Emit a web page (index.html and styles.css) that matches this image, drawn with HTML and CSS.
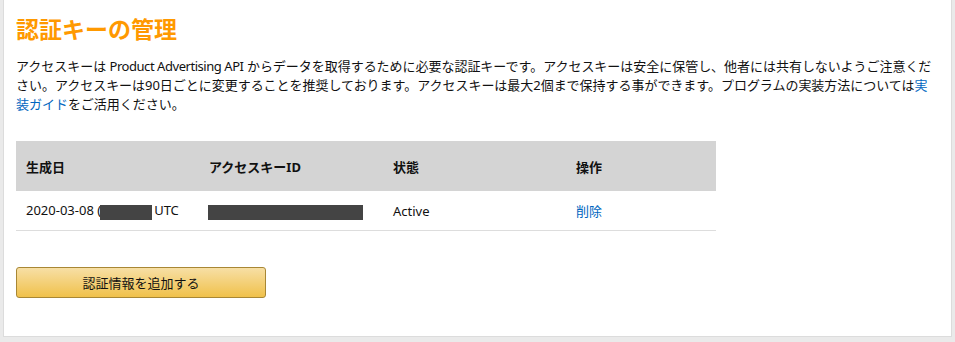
FILE: index.html
```html
<!DOCTYPE html>
<html>
  <head>
    <title>認証キーの管理</title>
    <meta charset="utf-8" />
    <link rel="stylesheet" href="styles.css">
  </head>
  <body>
    <div class="panel">
      <h1>認証キーの管理</h1>
      <p class="intro">
        アクセスキーは <span class="latin">Product Advertising API</span> からデータを取得するために必要な認証キーです。アクセスキーは安全に保管し、他者には共有しないようご注意ください。アクセスキーは90日ごとに変更することを推奨しております。アクセスキーは最大2個まで保持する事ができます。プログラムの実装方法については<a href="#">実装ガイド</a>をご活用ください。
      </p>

      <table class="keys">
        <thead>
          <tr>
            <th class="col-date">生成日</th>
            <th class="col-id">アクセスキーID</th>
            <th class="col-state">状態</th>
            <th class="col-action">操作</th>
          </tr>
        </thead>
        <tbody>
          <tr>
            <td class="nowrap">2020-03-08 (<span class="redacted short"></span>UTC</td>
            <td><span class="redacted long"></span></td>
            <td>Active</td>
            <td><a href="#">削除</a></td>
          </tr>
        </tbody>
      </table>

      <button class="add-button" type="button">認証情報を追加する</button>
    </div>
  </body>
</html>
```

FILE: styles.css
```css
:root {
  --text: #111;
  --link: #0066c0;
}

html,
body,
button,
table {
  font-family: "Noto Sans", "Noto Sans CJK JP", sans-serif;
  font-size: 13px;
  color: var(--text);
}

html {
  margin: 0;
  padding: 0;
}

body {
  margin: 0;
  padding: 0 3px;
  background: #eaeaea;
}

.panel {
  box-sizing: border-box;
  height: 337px;
  background: #fff;
  border: 1px solid #dcdcdc;
  border-top: 0;
  padding: 16px 13px 0 12px;
}

h1 {
  margin: 0;
  font-size: 23px;
  line-height: 26px;
  font-weight: bold;
  color: #f90;
}

.intro {
  margin: 15px 0 0 0;
  line-height: 19px;
  letter-spacing: -0.03px;
}

.intro .latin {
  letter-spacing: -0.45px;
}

a {
  color: var(--link);
  text-decoration: none;
}

.keys {
  margin-top: 27px;
  width: 700px;
  border-collapse: collapse;
}

.keys th {
  background: #d4d4d4;
  height: 50px;
  padding: 0 10px;
  text-align: left;
  font-weight: bold;
}

.keys td {
  height: 39px;
  padding: 0 10px;
  border-bottom: 1px solid #ddd;
}

.nowrap {
  white-space: nowrap;
}

.col-date {
  width: 163px;
}

.col-id {
  width: 164px;
}

.col-state {
  width: 163px;
}

.redacted {
  display: inline-block;
  vertical-align: middle;
  height: 15px;
  background: #444;
}

.redacted.short {
  width: 52px;
  margin: 0 2px 0 -1px;
}

.redacted.long {
  width: 155px;
  margin-left: -1px;
}

.add-button {
  display: block;
  margin-top: 36px;
  width: 250px;
  height: 31px;
  border: 1px solid #a88734;
  border-radius: 3px;
  background: linear-gradient(to bottom, #f7dfa5, #f0c14b);
  color: #111;
  cursor: pointer;
}
```
